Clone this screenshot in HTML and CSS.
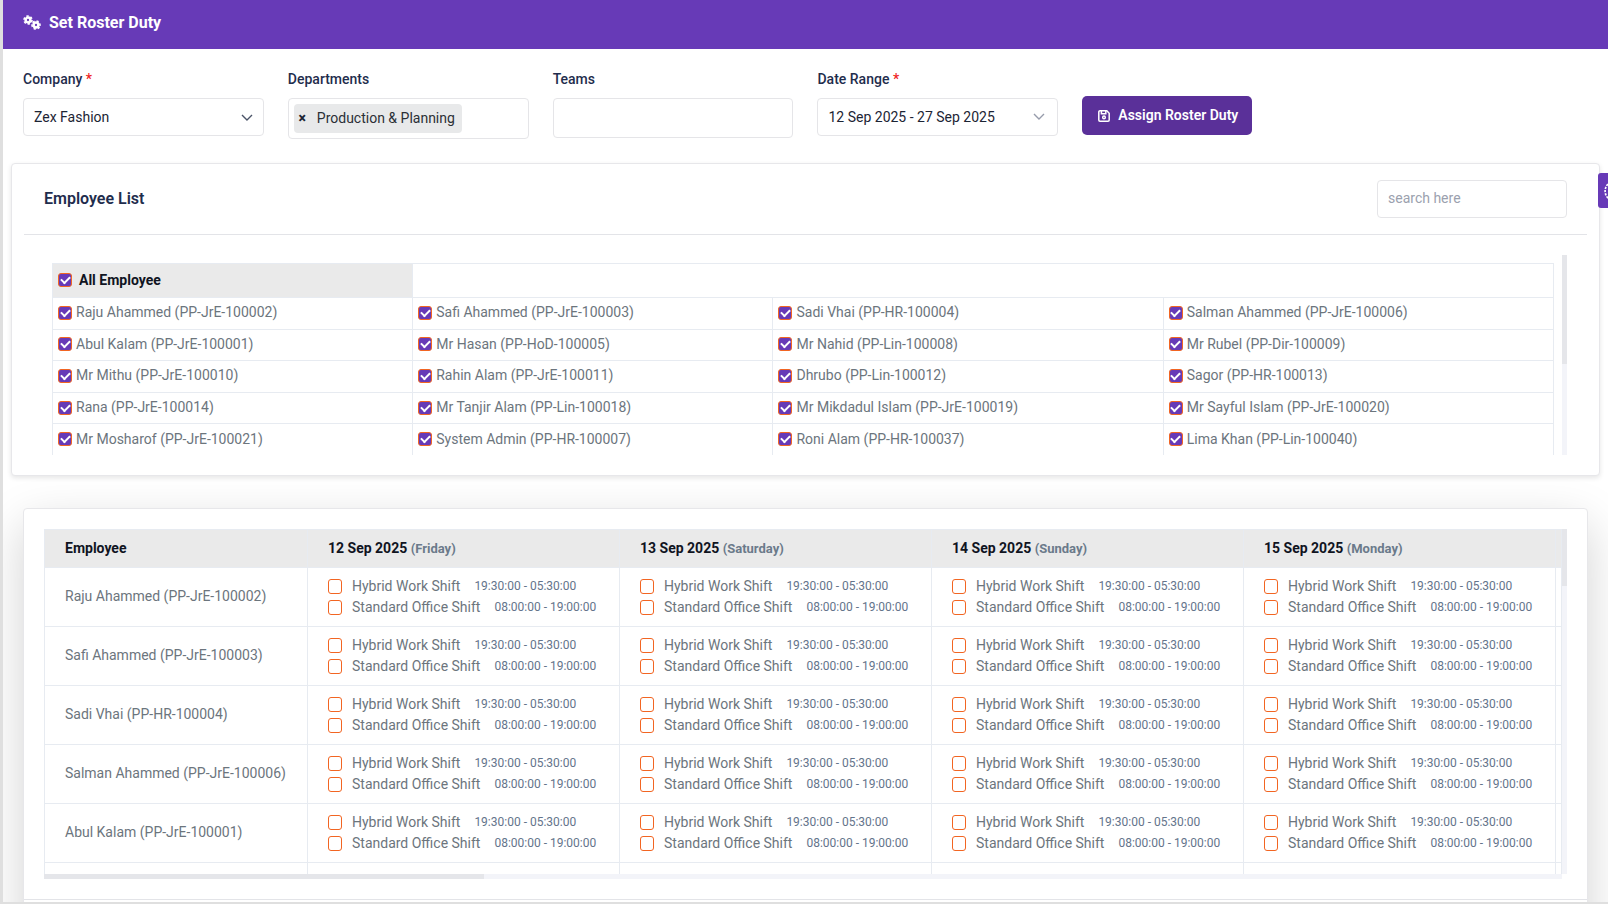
FILE: index.html
```
<!DOCTYPE html>
<html lang="en">
<head>
  <meta charset="UTF-8" />
  <meta name="viewport" content="width=device-width, initial-scale=1.0"/>
  <title>Set Roster Duty</title>
  <link rel="stylesheet" href="styles.css">
</head>
<body>

  <main class="page">
    <header class="page-header">
      <svg class="cogs" viewBox="0 0 36 30" aria-hidden="true">
        <g fill="none" stroke="#fff">
          <circle cx="10" cy="10" r="4.8" stroke-width="5"/>
          <circle cx="10" cy="10" r="8" stroke-width="3.2" stroke-dasharray="4.6 3.78"/>
          <circle cx="26" cy="20" r="4.8" stroke-width="5"/>
          <circle cx="26" cy="20" r="8" stroke-width="3.2" stroke-dasharray="4.6 3.78" transform="rotate(30 26 20)"/>
        </g>
      </svg>
      <h1>Set Roster Duty</h1>
    </header>

    <form class="filters">
      <div class="field">
        <label for="company">Company <span class="required">*</span></label>
        <div class="control">
          <select id="company">
            <option>Zex Fashion</option>
          </select>
          <svg class="chevron" viewBox="0 0 12 8" aria-hidden="true"><path d="M1 1l5 5 5-5"/></svg>
        </div>
      </div>
      <div class="field">
        <label for="departments">Departments</label>
        <div class="tags">
          <span class="tag"><button type="button" class="tag-remove" aria-label="Remove">×</button>Production &amp; Planning</span>
          <input type="text" id="departments">
        </div>
      </div>
      <div class="field">
        <label for="teams">Teams</label>
        <input type="text" id="teams" class="teams">
      </div>
      <div class="field">
        <label for="dates">Date Range <span class="required">*</span></label>
        <div class="control">
          <input type="text" id="dates" value="12 Sep 2025 - 27 Sep 2025" readonly>
          <svg class="chevron light" viewBox="0 0 12 8" aria-hidden="true"><path d="M1 1l5 5 5-5"/></svg>
        </div>
      </div>
      <div class="field action">
        <button type="button" class="assign">
          <svg viewBox="0 0 12 12" aria-hidden="true">
            <path d="M2 .8h6.8l2.4 2.4V10a1.2 1.2 0 0 1-1.2 1.2H2A1.2 1.2 0 0 1 .8 10V2A1.2 1.2 0 0 1 2 .8z"/>
            <path d="M3.4 1v2.8h4.4V1"/>
            <circle cx="6" cy="7.4" r="1.3"/>
          </svg>
          Assign Roster Duty
        </button>
      </div>
    </form>

    <section class="card employees">
      <div class="card-header">
        <h2>Employee List</h2>
        <input type="text" class="search" placeholder="search here" aria-label="Search employees">
      </div>
      <div class="employee-pane">
        <div class="employee-scroll">
          <table class="employee-table">
            <colgroup>
              <col class="narrow"><col class="narrow"><col class="wide"><col class="wide">
            </colgroup>
            <thead>
              <tr>
                <th><label class="check all"><input type="checkbox" checked>All Employee</label></th>
                <td colspan="3"></td>
              </tr>
            </thead>
            <tbody id="employeeRows"></tbody>
          </table>
        </div>
        <div class="bar-v"><div class="thumb"></div></div>
      </div>
    </section>

    <section class="card roster">
      <div class="roster-pane">
        <div class="roster-scroll">
          <table class="roster-table">
            <thead>
              <tr id="rosterHead"><th class="name">Employee</th></tr>
            </thead>
            <tbody id="rosterRows"></tbody>
          </table>
        </div>
        <div class="bar-v"><div class="thumb"></div></div>
      </div>
      <div class="bar-h"><div class="thumb"></div></div>
      <div class="card-footer"></div>
    </section>
  </main>

  <button type="button" class="settings" aria-label="Settings">
    <svg viewBox="0 0 20 20" aria-hidden="true">
      <circle cx="10" cy="10" r="9"/>
      <circle cx="10" cy="10" r="4"/>
    </svg>
  </button>

  <script>
    const employees = [
      ['Raju Ahammed (PP-JrE-100002)', 'Safi Ahammed (PP-JrE-100003)', 'Sadi Vhai (PP-HR-100004)', 'Salman Ahammed (PP-JrE-100006)'],
      ['Abul Kalam (PP-JrE-100001)', 'Mr Hasan (PP-HoD-100005)', 'Mr Nahid (PP-Lin-100008)', 'Mr Rubel (PP-Dir-100009)'],
      ['Mr Mithu (PP-JrE-100010)', 'Rahin Alam (PP-JrE-100011)', 'Dhrubo (PP-Lin-100012)', 'Sagor (PP-HR-100013)'],
      ['Rana (PP-JrE-100014)', 'Mr Tanjir Alam (PP-Lin-100018)', 'Mr Mikdadul Islam (PP-JrE-100019)', 'Mr Sayful Islam (PP-JrE-100020)'],
      ['Mr Mosharof (PP-JrE-100021)', 'System Admin (PP-HR-100007)', 'Roni Alam (PP-HR-100037)', 'Lima Khan (PP-Lin-100040)']
    ];

    const days = [
      ['12 Sep 2025', 'Friday'],
      ['13 Sep 2025', 'Saturday'],
      ['14 Sep 2025', 'Sunday'],
      ['15 Sep 2025', 'Monday']
    ];

    const shifts = [
      ['Hybrid Work Shift', '19:30:00 - 05:30:00'],
      ['Standard Office Shift', '08:00:00 - 19:00:00']
    ];

    document.getElementById('employeeRows').innerHTML = employees.map(row =>
      `<tr>${row.map(name =>
        `<td><label class="check"><input type="checkbox" checked>${name}</label></td>`
      ).join('')}</tr>`
    ).join('');

    document.getElementById('rosterHead').innerHTML += days.map(([date, day]) =>
      `<th class="day">${date} <small>(${day})</small></th>`
    ).join('') + '<th></th>';

    const shiftList = shifts.map(([name, time]) =>
      `<label class="shift"><input type="checkbox">${name}<span class="time">${time}</span></label>`
    ).join('');

    // Next row and next day only peek in at the edges of the pane
    const dayCells = days.map(() => `<td>${shiftList}</td>`).join('') + '<td></td>';
    document.getElementById('rosterRows').innerHTML = employees.flat().slice(0, 5).map(name =>
      `<tr><td>${name}</td>${dayCells}</tr>`
    ).join('') + `<tr>${'<td></td>'.repeat(days.length + 2)}</tr>`;
  </script>

</body>
</html>
```
FILE: styles.css
```
* {
  box-sizing: border-box;
}

body {
  margin: 0;
  background: #dfdfdf;
  font-family: Roboto, 'Liberation Sans', sans-serif;
  font-size: 14px;
  line-height: 21px;
  color: #6c757d;
}

h1, h2 {
  margin: 0;
  font-size: 16px;
  line-height: 24px;
}

button, input, select {
  font: inherit;
}

.page {
  height: calc(100vh - 2px);
  min-height: 600px;
  margin-left: 3px;
  background: #fff;
  overflow: hidden;
}

.page-header {
  display: flex;
  gap: 8px;
  height: 49px;
  padding: 11px 20px;
  background: #673ab7;
  color: #fff;
}

.page-header h1 {
  font-weight: 700;
}

.cogs {
  width: 18px;
  height: 15px;
  margin-top: 4px;
}

/* Filters */
.filters {
  display: grid;
  grid-template-columns: repeat(6, minmax(0, 1fr));
  gap: 24px;
  padding: 20px 20px 24px;
}

.field label {
  display: block;
  margin-bottom: 8px;
  font-weight: 500;
  color: #1f2d4d;
}

.required {
  color: #f01e1e;
}

.control {
  position: relative;
}

.control select,
.control input,
.teams,
.tags,
.search {
  display: block;
  width: 100%;
  height: 38px;
  padding: 0 10px;
  border: 1px solid #e5e5e8;
  border-radius: 4px;
  background: #fff;
  color: #1c2434;
  appearance: none;
  outline: none;
}

.chevron {
  position: absolute;
  right: 11px;
  top: 16px;
  width: 12px;
  height: 8px;
  fill: none;
  stroke: #4b5468;
  stroke-width: 1.4;
}

.chevron.light {
  right: 13px;
  top: 15px;
  stroke: #979cab;
}

.field .teams {
  height: 40px;
}

.field .tags {
  display: flex;
  align-items: center;
  height: 41px;
  padding: 0 5px;
}

.tags input {
  flex: 1;
  min-width: 0;
  border: 0;
  outline: none;
}

.tag {
  display: flex;
  align-items: center;
  height: 29px;
  padding-right: 7px;
  border-radius: 4px;
  background: #e8e9ea;
  color: #2b2f36;
  white-space: nowrap;
}

.tag-remove {
  width: 23px;
  padding: 0 6px 0 0;
  border: 0;
  background: none;
  font-weight: 900;
  color: #1c2434;
}

.action {
  padding-top: 27px;
}

.assign {
  display: flex;
  align-items: center;
  gap: 8px;
  height: 39px;
  padding: 0 14px 0 16px;
  border: 0;
  border-radius: 5px;
  background: #5a3099;
  color: #fff;
  font-weight: 600;
  white-space: nowrap;
}

.assign svg {
  width: 12px;
  height: 12px;
  fill: none;
  stroke: #fff;
  stroke-width: 1.5;
}

/* Checkboxes */
input[type="checkbox"] {
  flex: none;
  width: 14px;
  height: 15px;
  margin: 0;
  border: 1px solid #f26522;
  border-radius: 3px;
  background: #fff;
  appearance: none;
}

input[type="checkbox"]:checked {
  display: grid;
  place-items: center;
  height: 14px;
  background: #673ab7;
}

input[type="checkbox"]:checked::after {
  content: '';
  width: 7px;
  height: 4px;
  margin-bottom: 2px;
  border: solid #fff;
  border-width: 0 0 2px 2px;
  transform: rotate(-45deg);
}

.check {
  display: flex;
  align-items: center;
  gap: 4px;
  white-space: nowrap;
}

.check.all {
  gap: 7px;
}

/* Cards */
.card {
  border: 1px solid #e7e7ea;
  border-radius: 4px;
  background: #fff;
}

.employees {
  margin: 0 8px;
  padding: 0 12px 20px;
  box-shadow: 0 2px 5px rgba(0, 0, 0, 0.1);
}

.card-header {
  display: flex;
  align-items: center;
  justify-content: space-between;
  height: 71px;
  padding: 0 20px;
  border-bottom: 1px solid #e3e4e8;
}

.card-header h2 {
  font-weight: 600;
  color: #1f2d4d;
}

.search {
  width: 190px;
  padding-bottom: 2px;
}

.search::placeholder {
  color: #9ba1ae;
}

.employee-pane {
  display: flex;
  margin: 20px 20px 0;
}

.employee-scroll {
  flex: 1;
  height: 200px;
  padding: 8px 8px 0;
  overflow: hidden;
}

.bar-v {
  width: 5px;
  background: #f3f4f9;
}

.thumb {
  background: #e5e6ea;
}

.employees .thumb {
  height: 109px;
}

table {
  width: 100%;
  table-layout: fixed;
  border-collapse: collapse;
}

th, td {
  border: 1px solid #e7ebf1;
}

.employee-table {
  height: 193px;
}

.employee-table th,
.employee-table td {
  padding: 0 5px 1px;
}

.employee-table thead tr {
  height: 34px;
}

.narrow {
  width: 24%;
}

.wide {
  width: 26%;
}

th {
  background: #eaeaea;
  color: #10141f;
  font-weight: 700;
  text-align: left;
  white-space: nowrap;
}

/* Roster */
.roster {
  margin: 32px 20px 0;
  box-shadow: 0 16px 48px rgba(0, 0, 0, 0.175);
}

.roster-pane {
  display: flex;
  margin: 20px 20px 0;
}

.roster-scroll {
  flex: 1;
  min-width: 0;
  height: 345px;
  overflow: hidden;
}

.roster .bar-v .thumb {
  height: 57px;
}

.bar-h {
  margin: 0 25px 0 20px;
  background: #f3f4f9;
}

.bar-h .thumb {
  width: 29%;
  height: 5px;
}

.roster-table .name {
  width: 263px;
}

.roster-table .day {
  width: 312px;
}

.roster-table th {
  height: 38px;
  padding: 0 0 0 20px;
}

.roster-table td {
  height: 59px;
  padding: 0 0 1px 20px;
  white-space: nowrap;
}

.roster-table td:last-child,
.roster-table th:last-child {
  padding: 0;
}

.roster-table small {
  font-size: 13px;
  color: #6b7a8a;
}

.shift {
  display: flex;
  align-items: center;
}

.shift input {
  margin-right: 10px;
}

.time {
  margin-left: 14px;
  font-size: 12px;
  color: #64748b;
}

.card-footer {
  height: 60px;
  margin-top: 20px;
  border-top: 1px solid #e3e4e8;
}

.settings {
  position: fixed;
  right: -24px;
  top: 173px;
  width: 34px;
  height: 35px;
  padding: 6px;
  border: 0;
  border-radius: 3px;
  background: #673ab7;
}

.settings svg {
  display: block;
  width: 22px;
  height: 22px;
  fill: none;
  stroke: #fff;
  stroke-width: 1.5;
  stroke-dasharray: 2 1;
}
```
